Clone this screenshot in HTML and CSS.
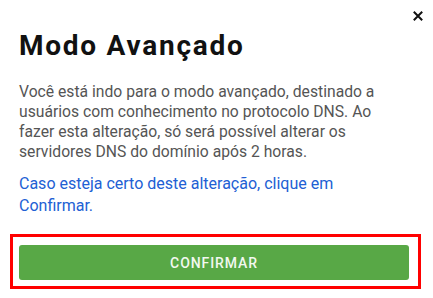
FILE: index.html
```html
<!DOCTYPE html>
<html lang="pt-BR">
<head>
    <meta charset="UTF-8">
    <meta name="viewport" content="width=device-width, initial-scale=1.0">
    <title>Modo Avançado</title>
    <link rel="stylesheet" href="styles.css">
</head>
<body>

    <!-- Modal -->
    <div class="modal">
        <button class="close-btn" aria-label="Fechar">
            <svg width="10" height="10" viewBox="0 0 10 10">
                <path d="M0.8 0.8 L9.2 9.2 M9.2 0.8 L0.8 9.2" stroke="#111" stroke-width="2"/>
            </svg>
        </button>

        <h2 class="modal-title">Modo Avançado</h2>

        <p class="modal-text">
            Você está indo para o modo avançado, destinado a usuários com conhecimento no protocolo DNS. Ao fazer esta alteração, só será possível alterar os servidores DNS do domínio após 2 horas.
        </p>

        <p class="modal-hint">
            Caso esteja certo deste alteração, clique em Confirmar.
        </p>

        <div class="highlight">
            <button class="btn-confirm">Confirmar</button>
        </div>
    </div>

</body>
</html>
```

FILE: styles.css
```css
/* Global Styles */
body {
    margin: 0;
    background: #ffffff;
    font-family: Roboto, "Liberation Sans", sans-serif;
}

/* Modal */
.modal {
    position: relative;
    padding: 31px 34px 0 19px;
}

.close-btn {
    position: absolute;
    top: 11px;
    right: 10px;
    padding: 0;
    border: none;
    background: none;
    line-height: 0;
    cursor: pointer;
}

.modal-title {
    margin: 0;
    font-size: 28px;
    line-height: 30px;
    font-weight: 700;
    letter-spacing: 1.75px;
    color: #111;
}

.modal-text {
    margin: 21px 0 0;
    font-size: 15.7px;
    line-height: 20px;
    color: #555;
}

.modal-hint {
    margin: 11px 0 0;
    font-size: 16px;
    line-height: 21.5px;
    color: #2160d4;
}

/* Red highlight around the action */
.highlight {
    margin: 18px -22px 0 -9px;
    padding: 8px 9px 6px 6px;
    border: 3px solid #ff0000;
}

.btn-confirm {
    display: block;
    width: 100%;
    height: 35px;
    border: none;
    border-radius: 3px;
    background-color: #58a846;
    color: #f2f8f0;
    font-family: Roboto, "Liberation Sans", sans-serif;
    font-size: 14px;
    font-weight: 500;
    letter-spacing: 0.9px;
    text-transform: uppercase;
    cursor: pointer;
}
```
